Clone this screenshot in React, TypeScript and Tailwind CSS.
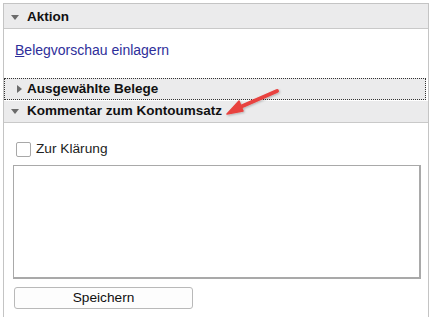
import React from "react";

function Tri({ open }: { open: boolean }) {
  return open ? (
    <svg width="8" height="5" viewBox="0 0 8 5" className="shrink-0">
      <path d="M0 0 L8 0 L4 5 Z" fill="#6b6b6b" />
    </svg>
  ) : (
    <svg width="5" height="8" viewBox="0 0 5 8" className="shrink-0">
      <path d="M0 0 L5 4 L0 8 Z" fill="#6b6b6b" />
    </svg>
  );
}

export default function App() {
  return (
    <div
      className="relative w-[433px] h-[317px] bg-white overflow-hidden"
      style={{ fontFamily: '"Liberation Sans", Arial, sans-serif' }}
    >
      <div className="absolute left-[3px] top-[3px] w-[426px] h-[330px] border border-[#c4c4c4] border-b-0" />
      <div className="pt-[4px] pl-[4px] pr-[5px] flex flex-col">
        {/* Aktion header */}
        <div className="h-[25px] pt-[2px] bg-[#ebebec] border-b border-[#c9c9c9] flex items-center gap-[8px] pl-[7px] text-[13.5px] font-bold text-[#111]">
          <Tri open />
          <span>Aktion</span>
        </div>
        <div className="h-[49px] pt-[11px] pl-[11px] text-[14px] text-[#2e2e9a]">
          <span>
            <span className="underline">B</span>elegvorschau einlagern
          </span>
        </div>
        {/* Ausgewählte Belege */}
        <div className="h-[22px] bg-[#ebebec] border border-dotted border-[#333] flex items-center gap-[5px] pl-[12px] text-[13.5px] font-bold text-[#111] mr-[2px]">
          <Tri open={false} />
          <span>Ausgewählte Belege</span>
        </div>
        <div className="h-[22px] bg-[#ebebec] border-b border-[#c9c9c9] mt-[1px] flex items-center gap-[8px] pl-[7px] text-[13.5px] font-bold text-[#111]">
          <Tri open />
          <span>Kommentar zum Kontoumsatz</span>
        </div>
        <div className="flex flex-col pl-[9px] pr-[7px]">
          <label className="flex items-center gap-[5px] mt-[16px] ml-[3px] text-[13.7px] text-[#222]">
            <span className="w-[15px] h-[15px] border border-[#a8a8a8] rounded-[2px] bg-white" />
            <span>Zur Klärung</span>
          </label>
          <div className="mt-[5px] h-[114px] border border-[#a9a9a9] border-r-2 border-b-2 bg-white" />
          <button className="mt-[8px] ml-[1px] w-[179px] h-[22px] border border-[#b9b9b9] rounded-[3px] bg-[#fdfdfd] text-[13.7px] text-[#111]">
            Speichern
          </button>
        </div>
      </div>
      {/* red arrow */}
      <svg
        className="absolute left-0 top-0 pointer-events-none"
        width="433"
        height="317"
        viewBox="0 0 433 317"
      >
        <defs>
          <filter id="sh" x="-20%" y="-20%" width="140%" height="140%">
            <feDropShadow dx="1" dy="1" stdDeviation="1" floodColor="#000" floodOpacity="0.25" />
          </filter>
        </defs>
        <g filter="url(#sh)">
          <path d="M277 91 L238 108" stroke="#e8433f" strokeWidth="4" strokeLinecap="round" fill="none" />
          <path d="M227 114 L239 101 L243 111 Z" fill="#e8433f" stroke="#e8433f" strokeWidth="1.5" strokeLinejoin="round" />
        </g>
      </svg>
    </div>
  );
}
